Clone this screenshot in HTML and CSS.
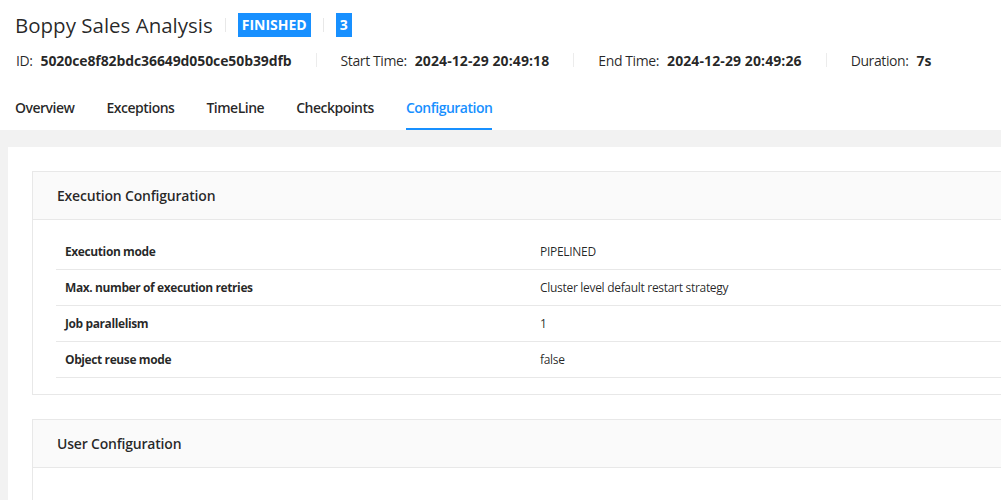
FILE: index.html
```html
<!DOCTYPE html>
<html>
<head>
<meta charset="utf-8">
<link rel="stylesheet" href="styles.css">
</head>
<body>
<div class="page-header">
  <div class="title-row">
    <h1 class="title">Boppy Sales Analysis</h1>
    <span class="vdiv"></span>
    <span class="tag">FINISHED</span>
    <span class="vdiv"></span>
    <span class="tag">3</span>
  </div>
  <div class="meta-row">
    <div class="meta"><span class="meta-label">ID:</span><span class="meta-value">5020ce8f82bdc36649d050ce50b39dfb</span></div>
    <span class="mdiv"></span>
    <div class="meta"><span class="meta-label">Start Time:</span><span class="meta-value wide">2024-12-29 20:49:18</span></div>
    <span class="mdiv"></span>
    <div class="meta"><span class="meta-label">End Time:</span><span class="meta-value wide">2024-12-29 20:49:26</span></div>
    <span class="mdiv"></span>
    <div class="meta"><span class="meta-label">Duration:</span><span class="meta-value">7s</span></div>
  </div>
  <nav class="tabs">
    <a class="tab">Overview</a>
    <a class="tab">Exceptions</a>
    <a class="tab">TimeLine</a>
    <a class="tab">Checkpoints</a>
    <a class="tab active">Configuration</a>
  </nav>
</div>
<div class="content">
  <div class="panel">
    <div class="card">
      <div class="card-head">Execution Configuration</div>
      <div class="card-body">
        <table class="cfg">
          <tr><td class="k">Execution mode</td><td class="v">PIPELINED</td></tr>
          <tr><td class="k">Max. number of execution retries</td><td class="v">Cluster level default restart strategy</td></tr>
          <tr><td class="k">Job parallelism</td><td class="v">1</td></tr>
          <tr><td class="k">Object reuse mode</td><td class="v">false</td></tr>
        </table>
      </div>
    </div>
    <div class="card">
      <div class="card-head">User Configuration</div>
      <div class="card-body tall"></div>
    </div>
  </div>
</div>
</body>
</html>
```
FILE: styles.css
```css
* { box-sizing: border-box; }
html, body { margin: 0; padding: 0; }
body {
  font-family: "Open Sans", "Noto Sans", sans-serif;
  color: rgba(0, 0, 0, 0.85);
  background: #fff;
  overflow: hidden;
}
.page-header {
  padding: 11px 15px 0 15px;
  background: #fff;
}
.title-row {
  display: flex;
  align-items: center;
  height: 28px;
}
.title {
  margin: 0;
  font-size: 20.5px;
  font-weight: 400;
  line-height: 28px;
  color: rgba(0, 0, 0, 0.85);
}
.vdiv {
  width: 1px;
  height: 14px;
  background: #e8e8e8;
  margin: 0 12px 0 12px;
}
.tag {
  background: #1890ff;
  color: #fff;
  font-weight: 700;
  font-size: 14px;
  line-height: 24px;
  height: 24px;
  padding: 0 4px;
}
.meta-row {
  display: flex;
  align-items: center;
  margin-top: 10px;
  height: 22px;
  font-size: 14px;
  padding-left: 1px;
}
.meta-label { margin-right: 8px; letter-spacing: -0.4px; }
.meta-value { font-weight: 700; letter-spacing: -0.1px; }
.meta-value.wide { letter-spacing: 0.1px; }
.mdiv {
  width: 1px;
  height: 14px;
  background: #ececec;
  margin: 0 24px;
}
.tabs {
  display: flex;
  gap: 32px;
  margin-top: 13px;
}
.tab {
  font-size: 14px;
  font-weight: 600;
  line-height: 22px;
  letter-spacing: -0.5px;
  padding: 13px 0 9px 0;
  border-bottom: 2px solid transparent;
  color: rgba(0, 0, 0, 0.85);
}
.tab.active {
  color: #1890ff;
  border-bottom-color: #1890ff;
}
.content {
  background: #f2f2f2;
  padding: 17px 0 0 8px;
}
.panel {
  background: #fff;
  padding: 24px 0 24px 24px;
  display: flex;
  flex-direction: column;
  gap: 24px;
}
.card {
  border: 1px solid #e8e8e8;
  border-right: none;
}
.card-head {
  background: #fafafa;
  border-bottom: 1px solid #e8e8e8;
  height: 48px;
  line-height: 47px;
  padding-left: 24px;
  font-size: 14px;
  font-weight: 600;
  letter-spacing: -0.2px;
}
.card-body {
  padding: 13px 0 16px 23px;
}
.card-body.tall { height: 60px; }
.cfg {
  border-collapse: collapse;
  table-layout: fixed;
  width: 952px;
  font-size: 12px;
}
.cfg td {
  height: 36px;
  padding: 1px 8px 0 8px;
  border-bottom: 1px solid #e8e8e8;
}
.cfg td.k {
  width: 476px;
  font-weight: 700;
  padding-left: 9px;
  letter-spacing: -0.4px;
}
.cfg td.v { color: rgba(0, 0, 0, 0.85); letter-spacing: -0.3px; }
```
